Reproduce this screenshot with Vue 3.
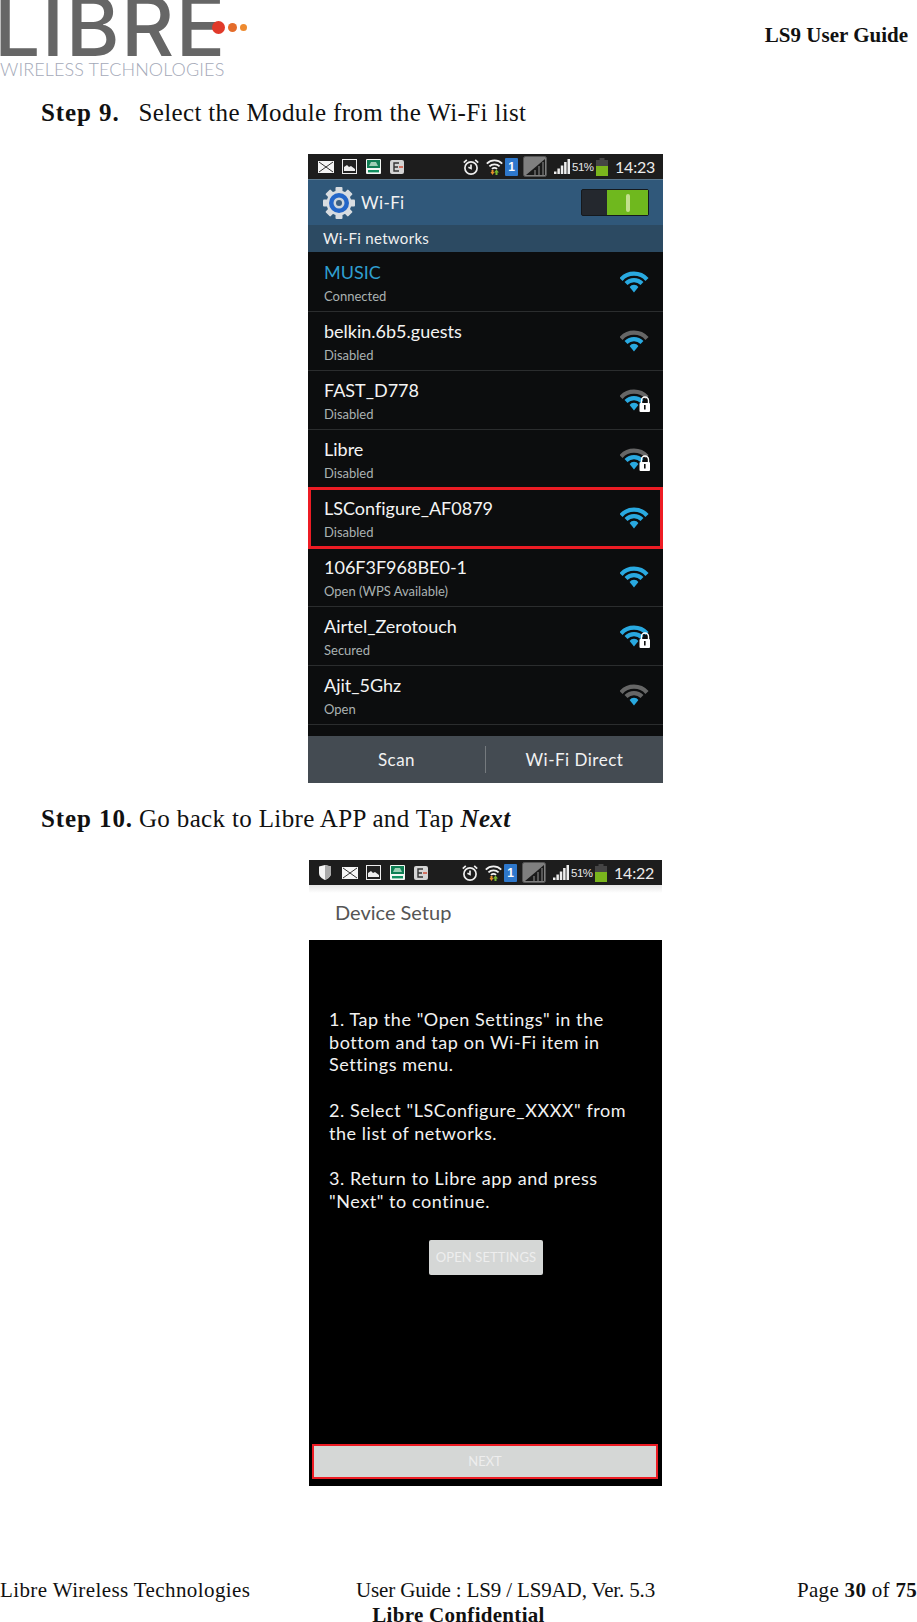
<script setup>
const networks = [
  { name: 'MUSIC', sub: 'Connected', level: 3, lock: false, active: true },
  { name: 'belkin.6b5.guests', sub: 'Disabled', level: 2, lock: false },
  { name: 'FAST_D778', sub: 'Disabled', level: 2, lock: true },
  { name: 'Libre', sub: 'Disabled', level: 2, lock: true },
  { name: 'LSConfigure_AF0879', sub: 'Disabled', level: 3, lock: false, selected: true },
  { name: '106F3F968BE0-1', sub: 'Open (WPS Available)', level: 3, lock: false },
  { name: 'Airtel_Zerotouch', sub: 'Secured', level: 3, lock: true },
  { name: 'Ajit_5Ghz', sub: 'Open', level: 1, lock: false },
]
const barColor = (level, need) => (level >= need ? '#29a9e0' : '#666666')
const gearTeeth = [0, 45, 90, 135, 180, 225, 270, 315]
</script>

<template>
  <div class="page">
    <svg class="defs" width="0" height="0" aria-hidden="true">
      <symbol id="mail" viewBox="0 0 16 12">
        <rect width="16" height="12" fill="#f4f4f4" />
        <path d="M1 1l7 5 7-5M1 11l7-5 7 5" fill="none" stroke="#333" stroke-width="1" />
      </symbol>
      <symbol id="pic" viewBox="0 0 15 15">
        <rect x=".5" y=".5" width="14" height="14" fill="#222" stroke="#eee" />
        <path d="M2 12V8l3-2 2 2 2-1 4 3v2z" fill="#eee" />
      </symbol>
      <symbol id="green" viewBox="0 0 15 15">
        <rect width="15" height="15" rx="1" fill="#f4f8f4" />
        <rect x="1" y="1" width="13" height="8" fill="#0f7f54" />
        <path d="M3 7l2-4h5l2 4z" fill="#9ccfb4" />
        <rect x="2" y="11" width="11" height="2.4" fill="#129060" />
      </symbol>
      <symbol id="ebox" viewBox="0 0 14 14">
        <rect width="14" height="14" rx="2" fill="#d4d4d4" />
        <path d="M9 3H4v8h5M4 7h4" fill="none" stroke="#333" stroke-width="1.4" />
        <path d="M9 7h4" stroke="#d2452e" stroke-width="1.4" />
      </symbol>
      <symbol id="alarm" viewBox="0 0 16 16">
        <circle cx="8" cy="9" r="6.1" fill="none" stroke="#eee" stroke-width="1.7" />
        <path d="M8 5.500v4l-2.600-1.200M.8 3.600L3.800.8M15.200 3.600L12.200.8" fill="none" stroke="#eee" stroke-width="1.7" />
      </symbol>
      <symbol id="swifi" viewBox="0 0 17 16">
        <path d="M.8 4.600a11 11 0 0 1 15.400 0M3.400 7.400a7.200 7.200 0 0 1 10.200 0M6 10a3.400 3.400 0 0 1 5 0" fill="none" stroke="#f2f2f2" stroke-width="1.800" />
        <path d="M6.500 11v3" stroke="#e8902a" stroke-width="2" />
        <path d="M10.500 16v-3" stroke="#7ab82e" stroke-width="2" />
        <path d="M8 13.500l2.500-3 2.500 3z" fill="#7ab82e" />
        <path d="M4.500 13l2 3 2-3z" fill="#e8902a" />
      </symbol>
      <symbol id="greybox" viewBox="0 0 24 21">
        <rect x=".5" y=".5" width="23" height="20" rx="2" fill="#7f7f7f" stroke="#555" />
        <path d="M3 19L22 3v16z" fill="#1a1a1a" />
        <path d="M12 19v-5M16 19v-9M20 19V6" stroke="#7f7f7f" stroke-width="1.2" />
      </symbol>
      <symbol id="signal" viewBox="0 0 16 15">
        <path d="M0 15h2.500v-2.500H0zM3.400 15h2.500V9.500H3.400zM6.800 15h2.500V6.500H6.800zM10.100 15h2.500V3H10.100zM13.500 15H16V0h-2.500z" fill="#eee" />
      </symbol>
      <symbol id="battery" viewBox="0 0 12 18">
        <path d="M3.500 0h5v2h3.500v16H0V2h3.500z" fill="#454545" />
        <rect y="8" width="12" height="10" fill="#7ab51d" />
      </symbol>
      <symbol id="shield" viewBox="0 0 12 15">
        <path d="M0 1.500L6 0l6 1.500V8c0 3.500-3 5.700-6 7-3-1.300-6-3.500-6-7z" fill="#f4f4f4" />
        <path d="M6 0l6 1.500V8c0 3.500-3 5.700-6 7z" fill="#aaa" />
      </symbol>
    </svg>

    <header class="head">
      <div class="logo">
        <div class="logo-mark">
          <span class="logo-word">LIBRE</span>
          <span class="dot dot-a"></span>
          <span class="dot dot-b"></span>
          <span class="dot dot-c"></span>
        </div>
        <div class="logo-sub">WIRELESS TECHNOLOGIES</div>
      </div>
      <div class="guide">LS9 User Guide</div>
    </header>

    <h2 class="step"><b class="step-num nine">Step 9.</b>Select the Module from the Wi-Fi list</h2>

    <section class="phone one">
      <div class="status">
        <div class="status-left">
          <svg class="i-mail"><use href="#mail" /></svg>
          <svg class="i-pic"><use href="#pic" /></svg>
          <svg class="i-pic"><use href="#green" /></svg>
          <svg class="i-e"><use href="#ebox" /></svg>
        </div>
        <div class="status-right">
          <svg class="i-alarm"><use href="#alarm" /></svg>
          <svg class="i-wifi"><use href="#swifi" /></svg>
          <span class="sim">1</span>
          <svg class="i-grey"><use href="#greybox" /></svg>
          <svg class="i-signal"><use href="#signal" /></svg>
          <span class="pct">51%</span>
          <svg class="i-bat"><use href="#battery" /></svg>
          <span class="time">14:23</span>
        </div>
      </div>

      <div class="wifi-bar">
        <svg class="gear" viewBox="0 0 32 32">
          <g fill="#d8dce0">
            <rect v-for="a in gearTeeth" :key="a" x="12.500" y="0" width="7" height="7" rx="1" :transform="`rotate(${a} 16 16)`" />
          </g>
          <circle cx="16" cy="16" r="12.500" fill="#d8dce0" />
          <circle cx="16" cy="16" r="10" fill="#2466c8" />
          <circle cx="16" cy="16" r="5.500" fill="#cfd6dc" />
          <circle cx="16" cy="16" r="3" fill="#3c5e80" />
        </svg>
        <span class="wifi-title">Wi-Fi</span>
        <div class="toggle"><div class="knob"><i></i></div></div>
      </div>
      <div class="section">Wi-Fi networks</div>

      <div class="list">
        <div v-for="n in networks" :key="n.name" class="row" :class="{ selected: n.selected }">
          <div class="row-text">
            <div class="row-name" :class="{ active: n.active }">{{ n.name }}</div>
            <div class="row-sub">{{ n.sub }}</div>
          </div>
          <svg class="wifi-icon" viewBox="0 0 30 24">
            <path d="M1 9.500A17.500 17.500 0 0 1 27 9.500" fill="none" :stroke="barColor(n.level, 3)" stroke-width="4.200" />
            <path d="M6 13.400A11.500 11.500 0 0 1 22 13.400" fill="none" :stroke="barColor(n.level, 2)" stroke-width="4.200" />
            <path d="M9.600 17A5.500 5.500 0 0 1 18.400 17L14 22.500z" fill="#29a9e0" />
            <g v-if="n.lock">
              <path d="M21.500 15v-2.500a3.500 3.500 0 0 1 7 0V15" fill="none" stroke="#fff" stroke-width="1.400" />
              <rect x="19.500" y="15" width="10.500" height="9" rx="1" fill="#fff" />
              <rect x="24" y="17" width="1.600" height="4.500" fill="#111" />
            </g>
          </svg>
        </div>
      </div>

      <div class="actions">
        <span class="act act-scan">Scan</span>
        <i class="act-sep"></i>
        <span class="act act-direct">Wi-Fi Direct</span>
      </div>
    </section>

    <h2 class="step two"><b class="step-num">Step 10.</b>Go back to Libre APP and Tap <b><i>Next</i></b></h2>

    <section class="phone setup">
      <div class="status">
        <div class="status-left">
          <svg class="i-shield"><use href="#shield" /></svg>
          <svg class="i-mail"><use href="#mail" /></svg>
          <svg class="i-pic"><use href="#pic" /></svg>
          <svg class="i-pic"><use href="#green" /></svg>
          <svg class="i-e"><use href="#ebox" /></svg>
        </div>
        <div class="status-right">
          <svg class="i-alarm"><use href="#alarm" /></svg>
          <svg class="i-wifi"><use href="#swifi" /></svg>
          <span class="sim">1</span>
          <svg class="i-grey"><use href="#greybox" /></svg>
          <svg class="i-signal"><use href="#signal" /></svg>
          <span class="pct">51%</span>
          <svg class="i-bat"><use href="#battery" /></svg>
          <span class="time">14:22</span>
        </div>
      </div>
      <div class="setup-title">Device Setup</div>
      <div class="setup-body">
        <div class="instructions">
          <p>1. Tap the "Open Settings" in the<br />bottom and tap on Wi-Fi item in<br />Settings menu.</p>
          <p>2. Select "LSConfigure_XXXX" from<br />the list of networks.</p>
          <p>3. Return to Libre app and press<br />"Next" to continue.</p>
        </div>
        <div class="open-btn">OPEN SETTINGS</div>
        <div class="next-btn">NEXT</div>
      </div>
    </section>

    <footer class="foot">
      <div class="foot-row">
        <span class="foot-a">Libre Wireless Technologies</span>
        <span class="foot-b">User Guide : LS9 / LS9AD, Ver. 5.3</span>
        <span class="foot-c">Page <b>30</b> of <b>75</b></span>
      </div>
      <div class="foot-conf">Libre Confidential</div>
    </footer>
  </div>
</template>

<style>
html, body { margin: 0; background: #fff; }
</style>

<style scoped>
.page {
  width: 917px;
  height: 1622px;
  overflow: hidden;
  background: #fff;
  color: #111;
  font-family: "Liberation Serif", serif;
  display: flex;
  flex-direction: column;
}
.defs { position: absolute; }
.head {
  height: 97px;
  display: flex;
  justify-content: space-between;
  align-items: flex-start;
  flex: none;
}
.logo { width: 250px; }
.logo-mark {
  position: relative;
  height: 58px;
  overflow: hidden;
}
.logo-word {
  display: block;
  font-family: Inter, sans-serif;
  font-weight: 500;
  font-size: 82px;
  line-height: 58px;
  letter-spacing: 1.500px;
  color: #666;
  margin-left: -6px;
  margin-top: -2px;
}
.dot { position: absolute; border-radius: 50%; }
.dot-a { left: 212px; top: 21px; width: 13px; height: 13px; background: #e13a2a; }
.dot-b { left: 228px; top: 23px; width: 9px; height: 9px; background: #e46c2b; }
.dot-c { left: 240px; top: 24px; width: 7px; height: 7px; background: #ee8a2f; }
.logo-sub {
  margin-top: 3px;
  font-family: Lato, sans-serif;
  font-weight: 300;
  font-size: 18px;
  line-height: 17px;
  letter-spacing: .1px;
  color: #a4a9b8;
  white-space: nowrap;
}
.guide {
  font-weight: 700;
  font-size: 21px;
  line-height: 26px;
  margin-top: 22px;
  margin-right: 9px;
}
.step {
  margin: 0 0 0 41px;
  font-weight: 400;
  font-size: 25px;
  line-height: 32px;
  height: 32px;
  letter-spacing: .35px;
  flex: none;
  white-space: nowrap;
}
.step.two { margin-top: 20px; }
.step-num { font-weight: 700; margin-right: 6px; letter-spacing: .9px; }
.step-num.nine { margin-right: 19px; }

.phone {
  flex: none;
  overflow: hidden;
  font-family: Lato, sans-serif;
  font-variant-ligatures: none;
}
.phone.one {
  width: 355px;
  height: 629px;
  margin: 25px 0 0 308px;
  background: #0c0d0e;
}
.phone.setup {
  width: 353px;
  height: 626px;
  margin: 25px 0 0 309px;
  background: #fff;
}
.status {
  height: 25px;
  background: #1d1d1d;
  display: flex;
  justify-content: space-between;
  align-items: center;
  padding: 0 10px;
}
.status-left, .status-right { display: flex; align-items: center; }
.status svg { display: block; flex: none; }
.i-shield { width: 12px; height: 15px; margin-right: 11px; }
.i-mail { width: 16px; height: 12px; margin-right: 8px; }
.i-pic { width: 15px; height: 15px; margin-right: 9px; }
.i-e { width: 14px; height: 14px; }
.i-alarm { width: 16px; height: 16px; margin-right: 7px; }
.i-wifi { width: 17px; height: 16px; margin-right: 2px; }
.sim {
  width: 13px;
  height: 18px;
  margin-right: 5px;
  background: #2e78cc;
  color: #fff;
  border-radius: 1px;
  font: 700 12px/18px "Liberation Sans", sans-serif;
  text-align: center;
}
.i-grey { width: 24px; height: 21px; margin-right: 7px; }
.i-signal { width: 16px; height: 15px; margin-right: 2px; }
.pct {
  width: 21px;
  margin-right: 3px;
  font: 400 11.500px/14px "Liberation Sans", sans-serif;
  letter-spacing: -.5px;
  color: #e8e8e8;
  white-space: nowrap;
}
.i-bat { width: 12px; height: 18px; margin-right: 7px; }
.time {
  width: 38px;
  font: 400 16px/18px Lato, sans-serif;
  letter-spacing: -.2px;
  color: #ececec;
  white-space: nowrap;
}
.wifi-bar {
  height: 46px;
  background: #30587a;
  border-top: 1px solid #5d7a90;
  box-sizing: border-box;
  display: flex;
  align-items: center;
  padding: 0 14px 0 15px;
}
.gear { width: 32px; height: 32px; flex: none; }
.wifi-title { margin-left: 6px; color: #f2f2f2; font-size: 17px; letter-spacing: .4px; }
.toggle {
  margin-left: auto;
  width: 68px;
  height: 27px;
  box-sizing: border-box;
  background: #24282e;
  border: 1px solid #15191d;
  border-radius: 2px;
  display: flex;
  justify-content: flex-end;
}
.knob {
  width: 41px;
  background: #6fb81e;
  display: flex;
  align-items: center;
  justify-content: center;
}
.knob i { width: 4px; height: 18px; background: #c3e08e; border-radius: 2px; }
.section {
  height: 27px;
  box-sizing: border-box;
  background: #2c4a62;
  color: #f0f0f0;
  font-size: 15px;
  line-height: 26px;
  padding-left: 15px;
  letter-spacing: .3px;
}
.list { height: 484px; box-sizing: border-box; padding-top: 1px; }
.row {
  height: 59px;
  box-sizing: border-box;
  border-bottom: 1px solid #2b2d2e;
  padding: 7px 13px 0 16px;
  display: flex;
  justify-content: space-between;
  position: relative;
}
.row.selected {
  border: 3px solid #ed1c24;
  height: 62px;
  margin: -2px 0 -1px;
  padding: 6px 10px 0 13px;
  z-index: 1;
}
.row-name { color: #f4f4f4; font-size: 18px; line-height: 24px; white-space: nowrap; }
.row-name.active { color: #2f9fd0; }
.row-sub { color: #aab2b2; font-size: 13px; line-height: 18px; margin-top: 3px; white-space: nowrap; }
.wifi-icon { width: 30px; height: 24px; flex: none; margin-top: 10px; }
.actions {
  height: 47px;
  background: #444b52;
  display: flex;
  align-items: center;
  color: #f2f2f2;
  font-size: 17px;
  letter-spacing: .5px;
}
.act { text-align: center; }
.act-scan { width: 177px; }
.act-direct { flex: 1; }
.act-sep { width: 1px; height: 27px; background: #757a7e; }

.setup-title {
  height: 55px;
  box-sizing: border-box;
  padding-left: 26px;
  font-size: 20px;
  line-height: 54px;
  color: #555;
  background: linear-gradient(#e6e6e6, #fff 8px);
}
.setup-body {
  height: 546px;
  background: #000;
  box-sizing: border-box;
  padding: 68px 4px 0 3px;
  display: flex;
  flex-direction: column;
}
.instructions {
  padding-left: 17px;
  color: #f2f2f2;
  font-size: 18px;
  line-height: 22.700px;
  letter-spacing: .55px;
  white-space: nowrap;
}
.instructions p { margin: 0 0 22.700px; }
.instructions p:last-child { margin-bottom: 0; }
.open-btn {
  width: 114px;
  height: 35px;
  margin: 27.700px 0 0 117px;
  background: #d5d7d6;
  border-radius: 2px;
  color: #eeeeee;
  font-size: 13px;
  line-height: 35px;
  text-align: center;
  letter-spacing: .1px;
}
.next-btn {
  margin-top: 169px;
  height: 35px;
  box-sizing: border-box;
  border: 2px solid #ed1c24;
  background: #d5d7d6;
  color: #eeeeee;
  font-size: 13px;
  line-height: 31px;
  text-align: center;
}

.foot { margin-top: 92px; flex: none; font-size: 21px; line-height: 25px; }
.foot-row { display: flex; height: 25px; }
.foot-a { width: 356px; letter-spacing: .4px; white-space: nowrap; }
.foot-b { letter-spacing: -.15px; white-space: nowrap; }
.foot-c { margin-left: auto; letter-spacing: .3px; white-space: nowrap; }
.foot-conf { margin-top: 3px; height: 19px; line-height: 19px; text-align: center; font-weight: 700; letter-spacing: .3px; }
</style>
